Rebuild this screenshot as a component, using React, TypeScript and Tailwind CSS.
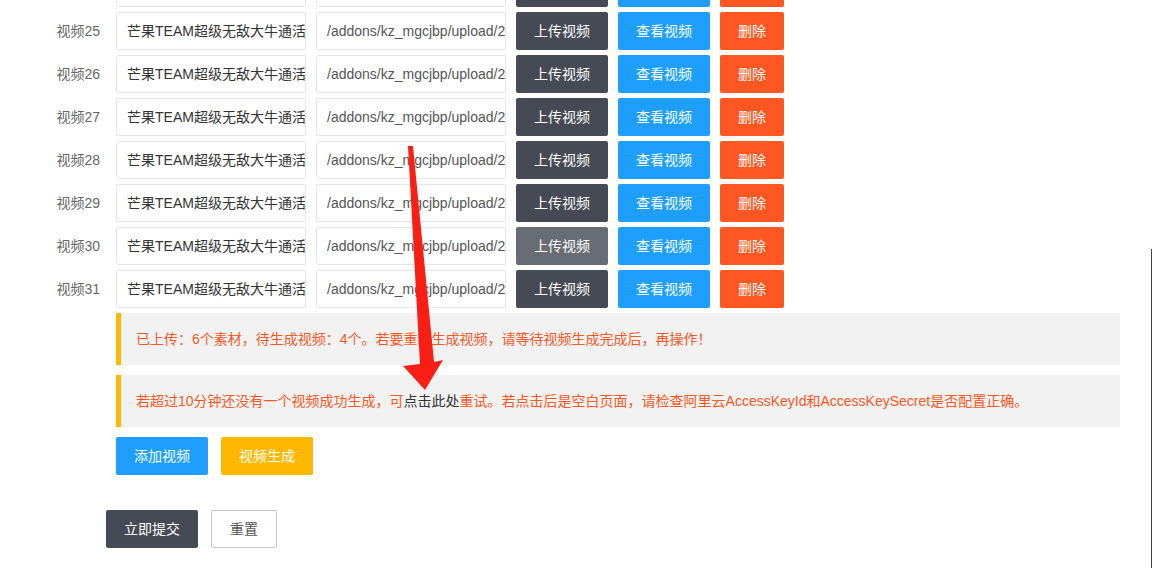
import React from "react";

const rows = [24, 25, 26, 27, 28, 29, 30, 31];

const font = {
  fontFamily: '"Liberation Sans", "Noto Sans CJK SC", sans-serif',
};

function VideoRow({ n }: { n: number }) {
  return (
    <div className="flex items-center h-[38px] mb-[5px] text-[14px]">
      <div className="w-[116px] pr-[16px] text-right text-[#666]">视频{n}</div>
      <div className="w-[190px] h-[38px] border border-[#e6e6e6] rounded-[2px] px-[10px] flex items-center overflow-hidden whitespace-nowrap text-[#333]">
        芒果TEAM超级无敌大牛通活动视频
      </div>
      <div className="ml-[10px] w-[190px] h-[38px] border border-[#e6e6e6] rounded-[2px] px-[10px] flex items-center overflow-hidden whitespace-nowrap text-[#555]">
        /addons/kz_mgcjbp/upload/2023/video.mp4
      </div>
      <button
        className={
          "ml-[10px] w-[92px] h-[38px] rounded-[2px] text-white " +
          (n === 30 ? "bg-[#676c75]" : "bg-[#454a54]")
        }
      >
        上传视频
      </button>
      <button className="ml-[10px] w-[92px] h-[38px] rounded-[2px] text-white bg-[#1e9fff]">
        查看视频
      </button>
      <button className="ml-[10px] w-[64px] h-[38px] rounded-[2px] text-white bg-[#ff5722]">
        删除
      </button>
    </div>
  );
}

export default function App() {
  return (
    <div className="relative w-[1152px] h-[568px] overflow-hidden bg-white" style={font}>
      <div className="flex flex-col -mt-[31px]">
        {rows.map((n) => (
          <VideoRow key={n} n={n} />
        ))}

        <div className="ml-[116px] w-[1004px] h-[52px] bg-[#f2f2f2] border-l-[5px] border-[#ffb800] pl-[15px] flex items-center text-[14px] text-[#ff5722]">
          已上传：6个素材，待生成视频：4个。若要重新生成视频，请等待视频生成完成后，再操作！
        </div>
        <div className="mt-[10px] ml-[116px] w-[1004px] h-[52px] bg-[#f2f2f2] border-l-[5px] border-[#ffb800] pl-[15px] flex items-center text-[14px] text-[#ff5722]">
          <span>若超过10分钟还没有一个视频成功生成，可</span>
          <span className="text-[#333]">点击此处</span>
          <span>重试。若点击后是空白页面，请检查阿里云AccessKeyId和AccessKeySecret是否配置正确。</span>
        </div>

        <div className="mt-[10px] ml-[116px] flex gap-[13px] text-[14px]">
          <button className="w-[92px] h-[38px] rounded-[2px] text-white bg-[#1e9fff]">添加视频</button>
          <button className="w-[92px] h-[38px] rounded-[2px] text-white bg-[#ffb800]">视频生成</button>
        </div>

        <div className="mt-[35px] ml-[106px] flex gap-[13px] text-[14px]">
          <button className="w-[92px] h-[38px] rounded-[2px] text-white bg-[#454a54]">立即提交</button>
          <button className="w-[66px] h-[38px] rounded-[2px] text-[#555] bg-white border border-[#c9c9c9]">
            重置
          </button>
        </div>
      </div>

      {/* red annotation arrow */}
      <svg className="absolute left-0 top-0 pointer-events-none" width="1152" height="568">
        <polygon
          points="408,146 413,146 434,362 443,360 425,390 403,366 420,364"
          fill="#fa1e14"
        />
      </svg>

      <div className="absolute left-[1151px] top-[249px] w-px h-[319px] bg-[#444]" />
    </div>
  );
}
